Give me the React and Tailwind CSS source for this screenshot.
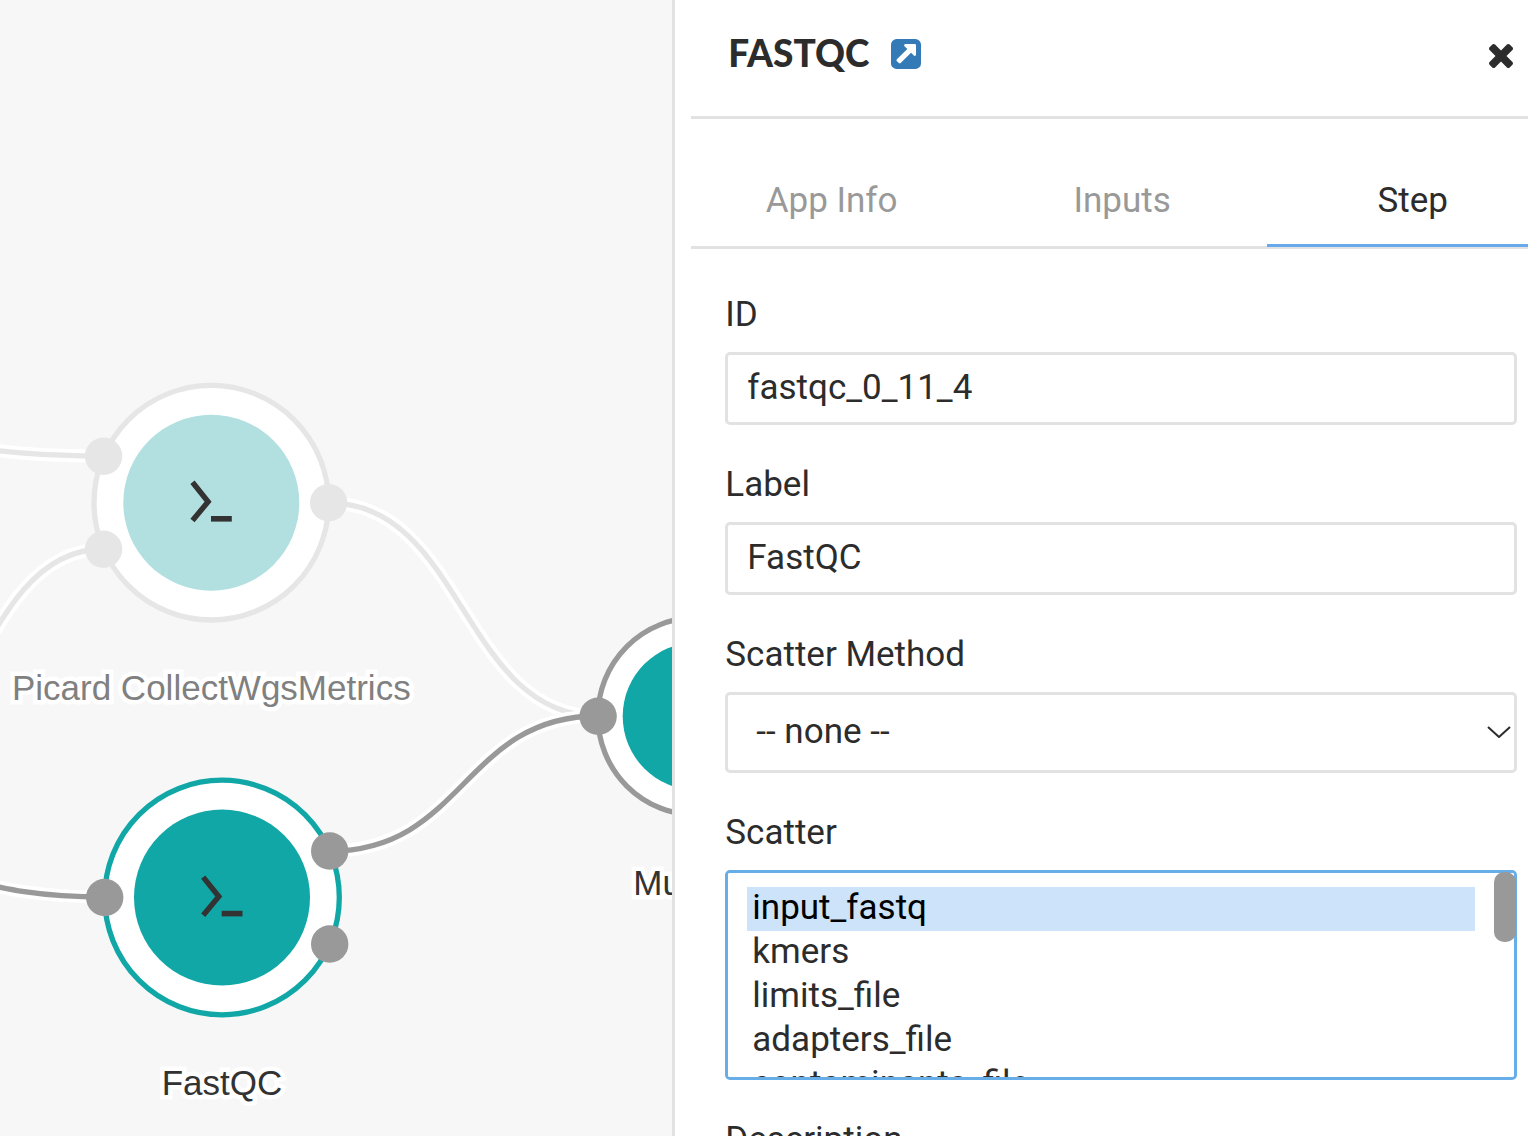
import { useState } from "react";

const LIVE = { ring: "#999999", port: "#999999", fill: "#11a7a7", text: "#333333" };
const ACTIVE = { ...LIVE, ring: "#11a7a7" };
const FADED = { ring: "#e6e6e6", port: "#e6e6e6", fill: "#b2dfdf", text: "#808080" };

const EDGES = [
  { d: "M-166 438 C-31 438 -31 456 104 456", color: "#e6e6e6" },
  { d: "M-166 808 C-31 808 -31 549 104 549", color: "#e6e6e6" },
  { d: "M329 503 C463 503 463 716 598 716", color: "#e6e6e6" },
  { d: "M-166 863 C-31 863 -31 897 105 897", color: "#999999" },
  { d: "M330 851 C464 851 464 716 598 716", color: "#999999" },
];

const NODES = [
  {
    label: "Picard CollectWgsMetrics", x: 211.3, y: 502.7, outer: 117.3, inner: 88, labelY: 700, theme: FADED,
    ports: [[-107.7, -46.5], [-107.7, 46.5], [117.3, 0]],
  },
  {
    label: "MultiQC", x: 696.5, y: 716.3, outer: 98.6, inner: 73.8, labelY: 895, theme: LIVE,
    ports: [[-98.4, 0]],
  },
  {
    label: "FastQC", x: 222, y: 897.5, outer: 117.3, inner: 88, labelY: 1095, theme: ACTIVE,
    ports: [[-117.3, 0], [107.7, -46.5], [107.7, 46.5]],
  },
];

const OPTIONS = ["input_fastq", "kmers", "limits_file", "adapters_file", "contaminants_file"];

function Node({ node }) {
  const { theme } = node;
  return (
    <g>
      <g transform={`translate(${node.x} ${node.y})`}>
        <circle r={node.outer} fill="#ffffff" stroke={theme.ring} strokeWidth="5.3" />
        <circle r={node.inner} fill={theme.fill} />
        <path d="M-18.8 -20.4 L-3.2 -1 L-18.8 17.8" fill="none" stroke="#333333" strokeWidth="5.4" />
        <rect x="-0.3" y="13.3" width="20.8" height="5.6" fill="#333333" />
        {node.ports.map(([x, y]) => (
          <circle key={`${x},${y}`} cx={x} cy={y} r="18.7" fill={theme.port} />
        ))}
      </g>
      <text
        x={node.x}
        y={node.labelY}
        textAnchor="middle"
        fill={theme.text}
        stroke="#ffffff"
        strokeWidth="9"
        paintOrder="stroke"
        className="font-['Liberation_Sans',sans-serif] text-[35px]"
      >
        {node.label}
      </text>
    </g>
  );
}

function WorkflowCanvas() {
  return (
    <main className="min-w-0 flex-1 overflow-hidden bg-[#f7f7f7]">
      <svg className="h-full w-full" role="img" aria-label="Workflow graph">
        {EDGES.map((edge) => (
          <g key={edge.d} fill="none">
            <path d={edge.d} stroke="#ffffff" strokeWidth="13" />
            <path d={edge.d} stroke={edge.color} strokeWidth="5.3" />
          </g>
        ))}
        {NODES.map((node) => (
          <Node key={node.label} node={node} />
        ))}
      </svg>
    </main>
  );
}

function Field({ id, label, children }) {
  return (
    <div className="flex flex-col gap-[15px]">
      <label htmlFor={id} className="leading-[44px]">{label}</label>
      {children}
    </div>
  );
}

function TextField({ id, label, initial }) {
  const [value, setValue] = useState(initial);
  return (
    <Field id={id} label={label}>
      <input
        id={id}
        type="text"
        value={value}
        onChange={(e) => setValue(e.target.value)}
        className="h-[73px] w-full rounded-[5px] border-3 border-[#e2e2e2] bg-white px-[19px] pb-[2px] outline-none"
      />
    </Field>
  );
}

export default function App() {
  const [tab, setTab] = useState("Step");
  const [scatter, setScatter] = useState(["input_fastq"]);

  return (
    <div className="flex h-screen overflow-hidden bg-white font-['Roboto',sans-serif] text-[35px] text-[#2c2c2c]">
      <WorkflowCanvas />

      <aside className="w-[56%] shrink-0 overflow-x-hidden overflow-y-auto border-l-3 border-[#e2e2e2] bg-white pl-4 [scrollbar-width:none]">
        <header className="flex h-[119px] items-center border-b-3 border-[#e2e2e2] pr-[15px] pb-2 pl-[37px]">
          <h1 className="pb-[2px] font-['Lato',sans-serif] text-[37px] leading-[44px] font-black">FASTQC</h1>
          <a href="#app" aria-label="Open app" className="ml-[22px] text-[#337ab7]">
            <svg viewBox="128 128 1536 1536" fill="currentColor" className="size-[30px]">
              <path d="M1408 928v-480q0-26-19-45t-45-19h-480q-42 0-59 39-17 41 14 70l144 144-534 534q-19 19-19 45t19 45l102 102q19 19 45 19t45-19l534-534 144 144q18 19 45 19 12 0 25-5 39-17 39-59zm256-512v960q0 119-84.5 203.5t-203.5 84.5h-960q-119 0-203.5-84.5t-84.5-203.5v-960q0-119 84.5-203.5t203.5-84.5h960q119 0 203.5 84.5t84.5 203.5z" />
            </svg>
          </a>
          <button type="button" aria-label="Close" className="ml-auto pt-1">
            <svg viewBox="302 366 1188 1188" fill="currentColor" className="size-6">
              <path d="M1490 1322q0 40-28 68l-136 136q-28 28-68 28t-68-28l-294-294-294 294q-28 28-68 28t-68-28l-136-136q-28-28-28-68t28-68l294-294-294-294q-28-28-28-68t28-68l136-136q28-28 68-28t68 28l294 294 294-294q28-28 68-28t68 28l136 136q28 28 28 68t-28 68l-294 294 294 294q28 28 28 68z" />
            </svg>
          </button>
        </header>

        <div className="border-b-3 border-[#e2e2e2]">
          <nav role="tablist" className="-mr-[30px] -mb-px -ml-[5px] grid grid-cols-3 pt-9">
            {["App Info", "Inputs", "Step"].map((name) => (
              <button
                key={name}
                type="button"
                role="tab"
                aria-selected={tab === name}
                onClick={() => setTab(name)}
                className={
                  tab === name
                    ? "relative border-b-3 border-[#68a9ec] pt-[25px] pb-[22px] leading-[42px]"
                    : "relative border-b-3 border-transparent pt-[25px] pb-[22px] leading-[42px] text-[#999999]"
                }
              >
                {name}
              </button>
            ))}
          </nav>
        </div>

        <form className="flex flex-col gap-[38px] pt-11 pr-[11px] pb-10 pl-[34px]">
          <TextField id="step-id" label="ID" initial="fastqc_0_11_4" />
          <TextField id="step-label" label="Label" initial="FastQC" />

          <Field id="scatter-method" label="Scatter Method">
            <div className="relative">
              <select
                id="scatter-method"
                className="block h-[81px] w-full appearance-none rounded-[5px] border-3 border-[#e2e2e2] bg-white pr-9 pl-7 outline-none"
              >
                <option>-- none --</option>
              </select>
              <svg
                viewBox="0 0 24 12"
                fill="none"
                stroke="#2c2c2c"
                strokeWidth="2"
                className="pointer-events-none absolute top-[34px] right-[6px] h-3 w-6"
              >
                <path d="M1 1 L12 11 L23 1" />
              </svg>
            </div>
          </Field>

          <Field id="scatter" label="Scatter">
            <div className="relative">
              <select
                id="scatter"
                multiple
                value={scatter}
                onChange={(e) => setScatter(Array.from(e.target.selectedOptions, (o) => o.value))}
                className="block h-[210px] w-full rounded-[5px] border-3 border-[#67aee8] bg-white py-[14px] pr-[39px] pl-[19px] outline-none [scrollbar-width:none]"
              >
                {OPTIONS.map((name) => (
                  <option
                    key={name}
                    value={name}
                    className="h-11 min-h-0 px-[5px] pt-0 pb-1 leading-[40px] checked:bg-[linear-gradient(#cce3f9,#cce3f9)] checked:text-black"
                  >
                    {name}
                  </option>
                ))}
              </select>
              <div className="pointer-events-none absolute top-[2px] right-px h-[70px] w-[22px] rounded-[10px] bg-[#999999]" />
            </div>
          </Field>

          <Field id="description" label="Description">
            <textarea
              id="description"
              rows={3}
              className="w-full rounded-[5px] border-3 border-[#e2e2e2] px-[19px] outline-none"
            />
          </Field>
        </form>
      </aside>
    </div>
  );
}
